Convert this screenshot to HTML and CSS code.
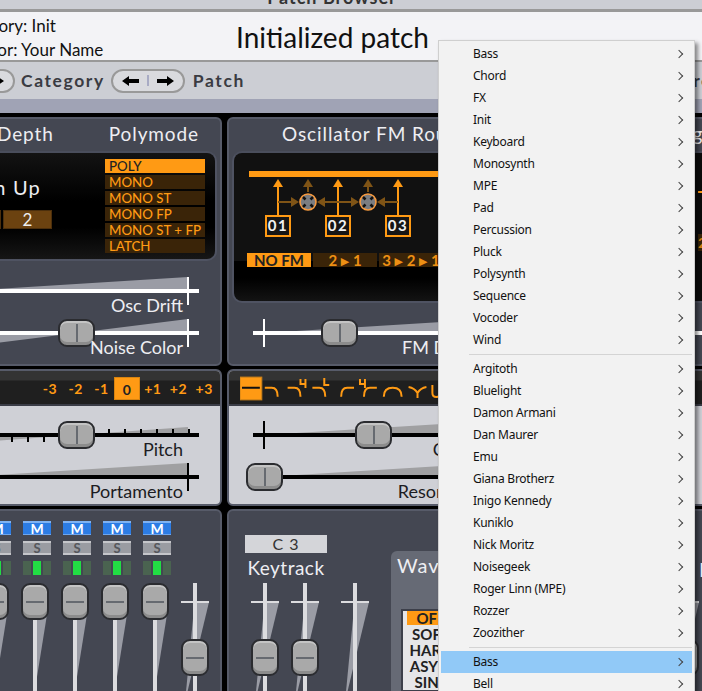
FILE: index.html
```html
<!DOCTYPE html>
<html lang="en">
<head>
    <meta charset="UTF-8">
    <link rel="stylesheet" href="styles.css">
    <title>Patch Browser</title>
</head>
<body>
    <div class="titlebar">Patch Browser</div>

    <div class="info">
        <div class="info-meta">
            <div>Category: Init</div>
            <div class="info-author">Author: Your Name</div>
        </div>
        <div class="patch-name">Initialized patch</div>
    </div>

    <div class="toolbar">
        <div class="pill">
            <svg class="arrow" viewBox="0 0 17 10"><path d="M0 5 7 0V3H17V7H7V10Z"/></svg>
            <span class="pill-sep"></span>
            <svg class="arrow" viewBox="0 0 17 10"><path d="M17 5 10 0V3H0V7H10V10Z"/></svg>
        </div>
        <span class="tool-label tool-category">Category</span>
        <div class="pill">
            <svg class="arrow" viewBox="0 0 17 10"><path d="M0 5 7 0V3H17V7H7V10Z"/></svg>
            <span class="pill-sep"></span>
            <svg class="arrow" viewBox="0 0 17 10"><path d="M17 5 10 0V3H0V7H10V10Z"/></svg>
        </div>
        <span class="tool-label tool-patch">Patch</span>
        <span class="tool-label tool-last">Preset</span>
    </div>

    <div class="strip"></div>

    <div class="rack">
        <!-- row 1 -->
        <section class="panel">
            <div class="panel-title title-split"><span>Pitch Bend Depth</span><span>Polymode</span></div>
            <div class="screen screen-bend">
                <div class="bend">
                    <div class="bend-label">Down Up</div>
                    <div class="bend-values"><span class="bend-box">2</span><span class="bend-box">2</span></div>
                </div>
                <ul class="modes">
                    <li class="mode-on">POLY</li>
                    <li>MONO</li>
                    <li>MONO ST</li>
                    <li>MONO FP</li>
                    <li>MONO ST + FP</li>
                    <li>LATCH</li>
                </ul>
            </div>
            <div class="sliders sliders-offset">
                <div class="hslider">
                    <span class="wedge"></span><span class="track"></span><span class="tick tick-end"></span>
                </div>
                <div class="slabel">Osc Drift</div>
                <div class="hslider">
                    <span class="wedge wedge-bi"></span><span class="track"></span><span class="tick tick-end"></span>
                    <span class="thumb" style="left:104.5px"></span>
                </div>
                <div class="slabel">Noise Color</div>
            </div>
        </section>

        <section class="panel">
            <div class="panel-title title-center">Oscillator FM Routing</div>
            <div class="screen screen-fm">
                <svg class="fm" viewBox="234 153 240 90">
                    <rect class="fm-bar" x="249" y="171" width="225" height="6"/>
                    <g class="fm-main">
                        <path d="M278 215V186M338 215V186M398 215V186"/>
                        <polygon points="273,187 283,187 278,179"/>
                        <polygon points="333,187 343,187 338,179"/>
                        <polygon points="393,187 403,187 398,179"/>
                    </g>
                    <g class="fm-dim">
                        <path d="M308 192V186M368 192V186M278 202H292M338 202H325M338 202H352M398 202H385"/>
                        <polygon points="303,187 313,187 308,179"/>
                        <polygon points="363,187 373,187 368,179"/>
                        <polygon points="291,197 291,207 299,202"/>
                        <polygon points="325,197 325,207 317,202"/>
                        <polygon points="351,197 351,207 359,202"/>
                        <polygon points="385,197 385,207 377,202"/>
                    </g>
                    <g class="fm-mix">
                        <circle cx="308" cy="202" r="8"/>
                        <circle cx="368" cy="202" r="8"/>
                        <path d="M303 197 305.500 199.500M313 197 310.500 199.500M303 207 305.500 204.500M313 207 310.500 204.500"/>
                        <path d="M363 197 365.500 199.500M373 197 370.500 199.500M363 207 365.500 204.500M373 207 370.500 204.500"/>
                    </g>
                    <g class="fm-osc">
                        <rect x="266" y="216" width="24" height="20"/>
                        <rect x="326" y="216" width="24" height="20"/>
                        <rect x="386" y="216" width="24" height="20"/>
                        <text x="278" y="231">01</text>
                        <text x="338" y="231">02</text>
                        <text x="398" y="231">03</text>
                    </g>
                </svg>
                <div class="fm-modes">
                    <span class="fm-mode fm-mode-on">NO FM</span>
                    <span class="fm-mode">2 <i>▶</i> 1</span>
                    <span class="fm-mode">3 <i>▶</i> 2 <i>▶</i> 1</span>
                </div>
            </div>
            <div class="sliders sliders-fm">
                <div class="hslider">
                    <span class="wedge"></span><span class="track"></span><span class="tick tick-start"></span>
                    <span class="thumb" style="left:67.5px"></span>
                </div>
                <div class="slabel">FM Depth</div>
            </div>
        </section>

        <section class="panel">
            <div class="panel-title title-far">Configure</div>
            <div class="screen screen-far">
                <div class="far-line"></div>
                <div class="far-box">2</div>
            </div>
            <div class="far-track"></div>
        </section>

        <!-- row 2 -->
        <section class="panel panel-light">
            <div class="panel-head">
                <div class="transpose">
                    <span>-3</span><span>-2</span><span>-1</span><span class="transpose-on">0</span><span>+1</span><span>+2</span><span>+3</span>
                </div>
            </div>
            <div class="sliders sliders-offset">
                <div class="hslider">
                    <span class="wedge wedge-bi wedge-small"></span><span class="track"></span>
                    <span class="ticks-up"></span><span class="ticks-down"></span>
                    <span class="thumb" style="left:104.5px"></span>
                </div>
                <div class="slabel">Pitch</div>
                <div class="hslider">
                    <span class="wedge"></span><span class="track"></span><span class="tick tick-end"></span>
                </div>
                <div class="slabel">Portamento</div>
            </div>
        </section>

        <section class="panel panel-light">
            <div class="panel-head panel-head-icons">
                <svg class="filters" viewBox="0 0 240 27">
                    <rect class="filter-on" x="0" y="2" width="22" height="23"/>
                    <path class="filter-flat" d="M2 12.700H20"/>
                    <path d="M25 12.700h7q6 0 6 9M48 12.700h7q6 0 6 9M61 4v5h5M66 4v9M73 12.700h7q6 0 6 9M85 3v7h5"/>
                    <path d="M102 21.700q0-9 6-9h7M125 21.700q0-9 6-9h7M121 4v5h5M126 4v9"/>
                    <path d="M145 21.700q0-9 9-9t9 9M170 12q6 1 9 6q3-5 9-6M179 18v5M194 10v8q0 4 4 4t4-4v-8"/>
                </svg>
            </div>
            <div class="sliders sliders-fm">
                <div class="hslider">
                    <span class="wedge"></span><span class="track"></span><span class="tick tick-start"></span>
                    <span class="thumb" style="left:101.5px"></span>
                </div>
                <div class="slabel">Cutoff</div>
                <div class="hslider">
                    <span class="wedge"></span><span class="track"></span>
                    <span class="thumb" style="left:-7.500px"></span>
                </div>
                <div class="slabel">Resonance</div>
            </div>
        </section>

        <section class="panel panel-light">
            <div class="panel-head"></div>
        </section>

        <!-- row 3 -->
        <section class="panel panel-mixer">
            <div class="mix-col">
                <span class="mute">M</span><span class="solo">S</span>
                <div class="meter"><span></span><span class="meter-on"></span><span></span></div>
                <div class="vslider"><span class="vwedge"></span><span class="vtrack"></span><span class="vtick"></span><span class="vthumb"></span></div>
            </div>
            <div class="mix-col">
                <span class="mute">M</span><span class="solo">S</span>
                <div class="meter"><span></span><span class="meter-on"></span><span></span></div>
                <div class="vslider"><span class="vwedge"></span><span class="vtrack"></span><span class="vtick"></span><span class="vthumb"></span></div>
            </div>
            <div class="mix-col">
                <span class="mute">M</span><span class="solo">S</span>
                <div class="meter"><span></span><span class="meter-on"></span><span></span></div>
                <div class="vslider"><span class="vwedge"></span><span class="vtrack"></span><span class="vtick"></span><span class="vthumb"></span></div>
            </div>
            <div class="mix-col">
                <span class="mute">M</span><span class="solo">S</span>
                <div class="meter"><span></span><span class="meter-on"></span><span></span></div>
                <div class="vslider"><span class="vwedge"></span><span class="vtrack"></span><span class="vtick"></span><span class="vthumb"></span></div>
            </div>
            <div class="mix-col">
                <span class="mute">M</span><span class="solo">S</span>
                <div class="meter"><span></span><span class="meter-on"></span><span></span></div>
                <div class="vslider"><span class="vwedge"></span><span class="vtrack"></span><span class="vtick"></span><span class="vthumb"></span></div>
            </div>
            <div class="mix-col">
                <span class="mute">M</span><span class="solo">S</span>
                <div class="meter"><span></span><span class="meter-on"></span><span></span></div>
                <div class="vslider"><span class="vwedge"></span><span class="vtrack"></span><span class="vtick"></span><span class="vthumb"></span></div>
            </div>
            <div class="mix-col mix-master">
                <div class="vslider"><span class="vwedge"></span><span class="vtrack"></span><span class="vtick"></span><span class="vthumb" style="top:56px"></span></div>
            </div>
        </section>

        <section class="panel panel-keys">
            <div class="keytrack">
                <div class="key-box">C 3</div>
                <div class="key-label">Keytrack</div>
                <div class="key-sliders">
                    <div class="vslider"><span class="vwedge"></span><span class="vtrack"></span><span class="vtick"></span><span class="vthumb" style="top:56px"></span></div>
                    <div class="vslider"><span class="vwedge"></span><span class="vtrack"></span><span class="vtick"></span><span class="vthumb" style="top:56px"></span></div>
                    <div class="vslider key-third"><span class="vwedge"></span><span class="vtrack"></span><span class="vtick"></span></div>
                </div>
            </div>
            <div class="wave">
                <div class="wave-title">Waveshaper</div>
                <ul class="wave-list">
                    <li class="wave-on">OFF</li>
                    <li>SOFT</li>
                    <li>HARD</li>
                    <li>ASYM</li>
                    <li>SINE</li>
                </ul>
            </div>
        </section>

        <section class="panel panel-far">
            <div class="far-e">E</div>
            <div class="vslider"><span class="vwedge"></span><span class="vtrack"></span><span class="vtick"></span><span class="vthumb" style="top:56px"></span></div>
        </section>
    </div>

    <!-- context menu over the window -->
    <div class="menu">
        <div class="menu-item">Bass</div>
        <div class="menu-item">Chord</div>
        <div class="menu-item">FX</div>
        <div class="menu-item">Init</div>
        <div class="menu-item">Keyboard</div>
        <div class="menu-item">Monosynth</div>
        <div class="menu-item">MPE</div>
        <div class="menu-item">Pad</div>
        <div class="menu-item">Percussion</div>
        <div class="menu-item">Pluck</div>
        <div class="menu-item">Polysynth</div>
        <div class="menu-item">Sequence</div>
        <div class="menu-item">Vocoder</div>
        <div class="menu-item">Wind</div>
        <div class="menu-sep"></div>
        <div class="menu-item">Argitoth</div>
        <div class="menu-item">Bluelight</div>
        <div class="menu-item">Damon Armani</div>
        <div class="menu-item">Dan Maurer</div>
        <div class="menu-item">Emu</div>
        <div class="menu-item">Giana Brotherz</div>
        <div class="menu-item">Inigo Kennedy</div>
        <div class="menu-item">Kuniklo</div>
        <div class="menu-item">Nick Moritz</div>
        <div class="menu-item">Noisegeek</div>
        <div class="menu-item">Roger Linn (MPE)</div>
        <div class="menu-item">Rozzer</div>
        <div class="menu-item">Zoozither</div>
        <div class="menu-sep"></div>
        <div class="menu-item menu-active">Bass</div>
        <div class="menu-item">Bell</div>
    </div>
</body>
</html>
```

FILE: styles.css
```css
* {
    box-sizing: border-box;
}

html, body {
    margin: 0;
    height: 691px;
    overflow: hidden;
}

body {
    position: relative;
    background: #000;
    font-family: "Lato", "DejaVu Sans", sans-serif;
    color: #111;
}

ul {
    list-style: none;
    margin: 0;
    padding: 0;
}

/* top of the window */
.titlebar {
    height: 15px;
    margin-top: -3px;
    background: #ccced4;
    border-bottom: 3px solid #999;
    padding-right: 38px;
    text-align: center;
    font-size: 18px;
    font-weight: 700;
    letter-spacing: 1px;
    line-height: 0;
    color: #333;
}

.info {
    height: 50px;
    display: flex;
    background: #f3f3f6;
    border-bottom: 2px solid #999;
}

.info-meta {
    width: 281px;
    margin-left: -45px;
    padding-top: 2px;
    font-size: 17px;
    line-height: 24px;
}

.info-author {
    margin-left: 6px;
}

.patch-name {
    padding-top: 1px;
    font-size: 28px;
    line-height: 48px;
    white-space: nowrap;
}

.toolbar {
    height: 37px;
    display: flex;
    align-items: center;
    margin-left: -59px;
    background: #ccced4;
    width: 800px;
}

.pill {
    width: 74px;
    height: 24px;
    flex: none;
    display: flex;
    align-items: center;
    justify-content: center;
    gap: 8px;
    border: 2px solid #999;
    border-radius: 12px;
    background: #d9dade;
}

.arrow {
    width: 17px;
    height: 10px;
    fill: #000;
}

.pill-sep {
    width: 2px;
    height: 11px;
    background: #a8abc4;
}

.tool-label {
    font-size: 17.5px;
    font-weight: 700;
    letter-spacing: 1.6px;
    color: #3a3b42;
}

.tool-category {
    margin: 0 6px;
}

.tool-patch {
    margin-left: 8px;
}

.tool-last {
    margin-left: 436px;
}

.strip {
    height: 14px;
    background: #a0a3b5;
}

/* synth panels */
.rack {
    display: grid;
    grid-template-columns: 300px 253px 300px;
    grid-template-rows: 249px 137px 190px;
    column-gap: 5px;
    row-gap: 3px;
    width: 860px;
    margin-left: -78px;
    padding-top: 4px;
}

.panel {
    overflow: hidden;
    background: #444752;
    border: 2px solid #575b69;
    border-radius: 6px;
    color: #eeeef2;
}

.panel-title {
    height: 32px;
    font-size: 19px;
    line-height: 30px;
    letter-spacing: 0.9px;
    white-space: nowrap;
}

.title-split {
    display: flex;
    justify-content: flex-end;
    gap: 55px;
    padding-right: 21px;
}

.title-center {
    padding-left: 53px;
}

.title-far {
    padding-left: 156px;
}

.screen {
    height: 110px;
    margin: 0 3px 0 6px;
    border: 2px solid #4f5362;
    border-top-color: #4a4e5c;
    border-radius: 10px;
    background: linear-gradient(#131313, #000 45%, #000 70%, #161616);
}

.screen-bend {
    display: flex;
    justify-content: space-between;
    padding: 6px 10px 0 0;
}

.bend {
    width: 120px;
    text-align: right;
}

.bend-label {
    padding: 16px 11px 0 0;
    font-size: 20px;
    line-height: 24px;
    letter-spacing: 1.2px;
    white-space: nowrap;
}

.bend-values {
    display: flex;
    justify-content: flex-end;
    gap: 2px;
    margin-top: 11px;
}

.bend-box {
    width: 49px;
    height: 19px;
    background: #6b4210;
    border: 1px solid #4c2f0c;
    color: #eee;
    font-size: 17px;
    line-height: 17px;
    text-align: center;
}

.modes {
    width: 100px;
}

.modes li {
    height: 14px;
    margin-bottom: 2px;
    padding-left: 4px;
    background: #3a2408;
    color: #ff9a14;
    font-size: 13.3px;
    font-weight: 500;
    line-height: 14px;
    white-space: nowrap;
}

.modes .mode-on {
    background: #ff9a14;
    color: #222;
}

.screen-fm {
    height: 152px;
    margin-left: 3px;
    background: linear-gradient(#111 0, #111 108px, #000 108px, #000 125px, #131313);
}

.fm {
    display: block;
    width: 240px;
    height: 90px;
}

.fm-bar {
    fill: #ff9a14;
}

.fm-main {
    fill: #ff9a14;
    stroke: none;
}

.fm-main path {
    fill: none;
    stroke: #ff9a14;
    stroke-width: 2;
}

.fm-dim {
    fill: #7f5416;
}

.fm-dim path {
    fill: none;
    stroke: #7f5416;
    stroke-width: 2;
}

.fm-mix circle {
    fill: #7b7d81;
    stroke: #f79a3e;
    stroke-width: 1.6;
}

.fm-mix path {
    fill: none;
    stroke: #111;
    stroke-width: 2.5;
}

.fm-osc rect {
    fill: #161616;
    stroke: #ff9a14;
    stroke-width: 2;
}

.fm-osc text {
    fill: #f2f2f2;
    font-size: 15px;
    font-weight: 700;
    letter-spacing: 1.5px;
    text-anchor: middle;
}

.fm-modes {
    display: flex;
    gap: 2px;
    margin: 10px 0 0 13px;
}

.fm-mode {
    width: 64px;
    height: 14px;
    background: #3a2408;
    color: #ee9014;
    font-size: 15px;
    font-weight: 700;
    line-height: 14px;
    text-align: center;
    white-space: nowrap;
}

.fm-mode i {
    font-style: normal;
    font-size: 11px;
    vertical-align: 1px;
}

.fm-mode-on {
    background: #ff9a14;
    color: #222;
}

.screen-far {
    height: 152px;
    margin-left: 6px;
    margin-right: -80px;
    background: #0c0c0c;
    padding: 38px 0 0 203px;
}

.far-line {
    height: 2px;
    background: #ff9a14;
}

.far-box {
    margin-top: 41px;
    height: 17px;
    background: #3a2408;
    color: #d98412;
    font-size: 14px;
    font-weight: 700;
    line-height: 17px;
}

.far-track {
    height: 4px;
    margin: 28px 0 0 200px;
    background: #fff;
}

/* horizontal sliders */
.sliders {
    margin-top: 16px;
    --track: #fff;
    --wedge: #9a9ca5;
}

.sliders-offset {
    margin-left: 29px;
}

.sliders-fm {
    margin-left: 24px;
}

.hslider {
    position: relative;
    width: 246px;
    height: 28px;
}

.wedge {
    position: absolute;
    left: 11px;
    top: 0;
    width: 224px;
    height: 14px;
    background: var(--wedge);
    clip-path: polygon(0 100%, 100% 0, 100% 100%);
}

.wedge-bi {
    height: 28px;
    clip-path: polygon(50% 50%, 100% 0, 100% 50%, 50% 50%, 0 100%, 0 50%);
}

.wedge-small {
    top: 6px;
    height: 16px;
}

.track {
    position: absolute;
    left: 0;
    right: 0;
    top: 12px;
    height: 4px;
    background: var(--track);
}

.tick {
    position: absolute;
    top: 0;
    width: 2px;
    height: 28px;
    background: var(--track);
}

.tick-end {
    left: 234px;
}

.tick-start {
    left: 10px;
}

.ticks-up, .ticks-down {
    position: absolute;
    height: 4px;
    background: repeating-linear-gradient(to left, #000 0 2px, transparent 2px 16px);
}

.ticks-up {
    left: 155px;
    width: 82px;
    top: 8px;
}

.ticks-down {
    left: 58px;
    width: 34px;
    top: 16px;
    height: 5px;
}

.thumb {
    position: absolute;
    top: 0;
    width: 37px;
    height: 28px;
    border: 2px solid #2b2c30;
    border-radius: 9px;
    background: #a9a9a9;
    box-shadow: inset 0 2px 0 #c4c4c4, inset 0 -3px 0 #8c8c8c;
}

.thumb::after {
    content: "";
    position: absolute;
    left: 16px;
    top: 3px;
    width: 2px;
    height: 18px;
    background: #666a70;
}

.slabel {
    width: 246px;
    height: 20px;
    margin: -10px 0 4px;
    padding-right: 16px;
    position: relative;
    font-size: 18px;
    line-height: 20px;
    text-align: right;
    white-space: nowrap;
}

/* light panels with a dark header */
.panel-light {
    background: #cfd0d6;
    color: #1c1c22;
}

.panel-light .sliders {
    margin-top: 15px;
    --track: #000;
    --wedge: #a0a0a2;
}

.panel-head {
    height: 35px;
    display: flex;
    justify-content: flex-end;
    padding: 6px 3px 0 0;
    background: linear-gradient(#333 0, #333 9px, #1f1f1f 10px);
    border-bottom: 2px solid #3a3c46;
}

.panel-head-icons {
    justify-content: flex-start;
    padding: 4px 0 0 11px;
}

.transpose {
    display: flex;
}

.transpose span {
    width: 25.700px;
    height: 23px;
    color: #ff9a14;
    font-size: 14px;
    font-weight: 700;
    letter-spacing: 0.5px;
    line-height: 23px;
    text-align: center;
}

.transpose .transpose-on {
    background: #ff9a14;
    color: #222;
    border: 1px solid #d88410;
}

.filters {
    width: 240px;
    height: 27px;
    fill: none;
    stroke: #ff9a14;
    stroke-width: 2;
}

.filter-on {
    fill: #ff9a14;
    stroke: #c9801a;
    stroke-width: 1;
}

.filters .filter-flat {
    stroke: #111;
}

/* mixer */
.panel-mixer {
    display: flex;
    gap: 12px;
    padding: 10px 0 0 19px;
}

.mix-col {
    width: 28px;
    display: flex;
    flex-direction: column;
    flex: none;
}

.mute, .solo {
    height: 14px;
    margin-bottom: 6px;
    text-align: center;
    font-size: 14px;
    font-weight: 700;
    line-height: 12px;
}

.mute {
    background: #2c7ce4;
    border-top: 2px solid #7fb2f2;
    border-bottom: 1px solid #6ea6ee;
    color: #fff;
}

.solo {
    background: #9a9ca2;
    border-top: 2px solid #c5c6ca;
    border-bottom: 2px solid #c5c6ca;
    color: #55575c;
    font-size: 13px;
    line-height: 10px;
}

.meter {
    display: flex;
    gap: 2px;
    height: 14px;
    margin-bottom: 8px;
}

.meter span {
    width: 8px;
    background: #4a6350;
}

.meter .meter-on {
    background: #22dd44;
}

.mix-col .vslider {
    margin-left: -2px;
}

.panel-mixer .mix-col:not(.mix-master) .vwedge {
    height: 90px;
    clip-path: polygon(40% 0, 100% 0, 40% 100%);
}

.mix-master {
    padding-top: 62px;
}

.vslider {
    position: relative;
    width: 28px;
    height: 108px;
    flex: none;
}

.vwedge {
    position: absolute;
    left: 4px;
    top: 19px;
    width: 24px;
    height: 100px;
    background: #9a9ca5;
    clip-path: polygon(40% 0, 100% 0, 0 100%);
}

.vtrack {
    position: absolute;
    left: 12px;
    top: 0;
    bottom: 0;
    width: 4px;
    background: #dcdcdf;
}

.vtick {
    position: absolute;
    left: 0;
    top: 18px;
    width: 28px;
    height: 2px;
    background: #dcdcdf;
}

.vthumb {
    position: absolute;
    left: 0;
    top: 0;
    width: 28px;
    height: 37px;
    border: 2px solid #2b2c30;
    border-radius: 9px;
    background: #a9a9a9;
    box-shadow: inset 0 2px 0 #c4c4c4, inset 0 -3px 0 #8c8c8c;
}

.vthumb::after {
    content: "";
    position: absolute;
    left: 3px;
    right: 3px;
    top: 16px;
    height: 2px;
    background: #666a70;
}

/* keytrack and waveshaper */
.panel-keys {
    display: flex;
}

.keytrack {
    width: 162px;
    flex: none;
    padding: 24px 0 0 16px;
}

.key-box {
    width: 82px;
    height: 18px;
    background: #d4d5d9;
    color: #333;
    font-size: 16px;
    letter-spacing: 1px;
    line-height: 18px;
    text-align: center;
}

.key-label {
    width: 82px;
    height: 30px;
    font-size: 19px;
    letter-spacing: 0.5px;
    line-height: 30px;
    text-align: center;
}

.key-sliders {
    display: flex;
    gap: 12px;
    margin-left: 6px;
}

.key-third {
    margin-left: 10px;
}

.wave {
    flex: 1;
    margin-top: 40px;
    padding: 2px 0 0 6px;
    background: #666a75;
    border-radius: 6px 0 0 0;
}

.wave-title {
    height: 56px;
    font-size: 20px;
    letter-spacing: 1px;
    line-height: 24px;
    white-space: nowrap;
}

.wave-list {
    width: 60px;
    margin-left: 4px;
    padding: 0 4px;
    background: #e6e6e8;
    border: 2px solid #3c3f4a;
    color: #222;
    font-size: 15px;
    font-weight: 700;
    line-height: 16px;
    text-align: center;
}

.wave-on {
    margin-bottom: 1px;
    background: #ff9a14;
    line-height: 14px;
}

.panel-far {
    display: flex;
    padding: 0 0 0 184px;
    position: relative;
}

.panel-far .vslider {
    margin-top: 72px;
}

.far-e {
    order: 2;
    margin: 46px 0 0 0;
    font-size: 20px;
}

/* context menu */
.menu {
    position: absolute;
    left: 438px;
    top: 40px;
    width: 257px;
    height: 660px;
    padding: 2px 2px 0;
    background: #f2f2f2;
    border: 1px solid #cfcfcf;
    box-shadow: 3px 3px 4px rgba(0, 0, 0, 0.45);
    font-family: "Noto Sans", sans-serif;
    font-size: 12px;
    letter-spacing: -0.25px;
    color: #111;
}

.menu-item {
    position: relative;
    height: 22px;
    padding-left: 32px;
    line-height: 22px;
}

.menu-item::after {
    content: "";
    position: absolute;
    right: 10px;
    top: 8px;
    width: 5px;
    height: 5px;
    border-top: 1px solid #444;
    border-right: 1px solid #444;
    transform: rotate(45deg);
}

.menu-active {
    background: #91c9f7;
}

.menu-sep {
    height: 1px;
    margin: 3px 0 3px 28px;
    background: #d4d4d4;
}
```
